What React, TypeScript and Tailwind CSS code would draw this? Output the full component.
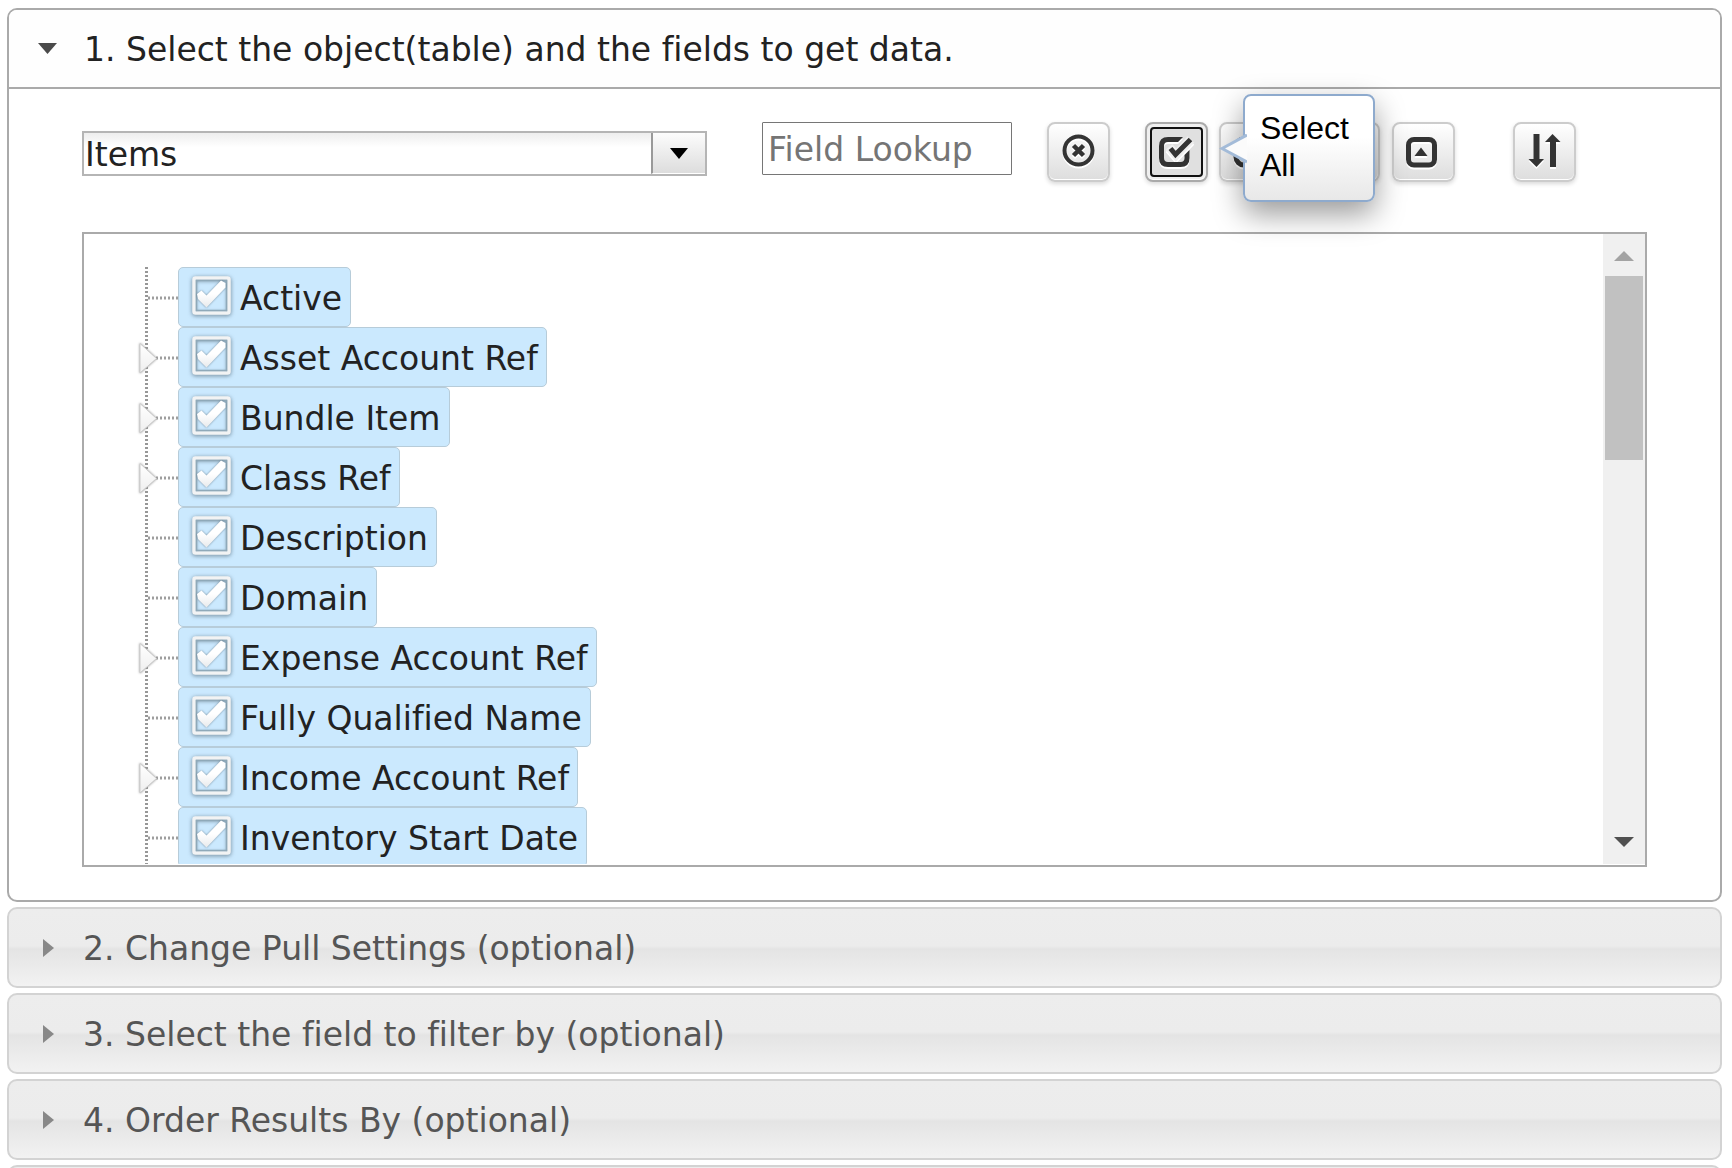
import { useState } from 'react';
import type { ReactNode } from 'react';

const fields = [
  { name: 'Active', branch: false },
  { name: 'Asset Account Ref', branch: true },
  { name: 'Bundle Item', branch: true },
  { name: 'Class Ref', branch: true },
  { name: 'Description', branch: false },
  { name: 'Domain', branch: false },
  { name: 'Expense Account Ref', branch: true },
  { name: 'Fully Qualified Name', branch: false },
  { name: 'Income Account Ref', branch: true },
  { name: 'Inventory Start Date', branch: false },
];

const steps = [
  '2. Change Pull Settings (optional)',
  '3. Select the field to filter by (optional)',
  '4. Order Results By (optional)',
];

const stepClass =
  'flex h-[81px] w-full items-center rounded-[10px] border-2 border-[#d3d3d3] bg-[linear-gradient(to_bottom,#ededed,#ececec_48%,#e4e4e4_52%,#f2f2f2)] pl-[34px] text-left text-[#555555]';

function ToolButton({ label, active = false, className = '', children }: { label: string; active?: boolean; className?: string; children: ReactNode }) {
  return (
    <button
      type="button"
      aria-label={label}
      className={`flex h-[60px] w-[63px] shrink-0 items-center justify-center rounded-lg border-2 shadow-[0_2px_4px_rgba(0,0,0,0.15),inset_0_-1px_0_#fff] ${
        active
          ? 'border-[#aaaaaa] bg-[#efefef] p-[3px]'
          : 'border-[#cccccc] bg-linear-to-b from-white to-[#dddddd]'
      } ${className}`}
    >
      {active ? (
        <span className="flex h-full w-full items-center justify-center rounded-[4px] border-2 border-[#111111] bg-[#e0e0e0]">{children}</span>
      ) : (
        children
      )}
    </button>
  );
}

const iconClass = 'h-[34px] w-[34px] shrink-0 overflow-visible drop-shadow-[0_2px_0_#ffffff]';

function ClearIcon() {
  return (
    <svg viewBox="0 0 34 34" className={iconClass} fill="none" stroke="#333333">
      <circle cx="16.500" cy="15.500" r="14" strokeWidth="4" />
      <path d="M11.500 10.500l10 10M21.500 10.500l-10 10" strokeWidth="4.500" />
    </svg>
  );
}

function CheckIcon() {
  return (
    <svg viewBox="1 0 34 34" className={iconClass} fill="#333333">
      <path d="M24 2H9Q0 2 0 11V23Q0 32 9 32H21.500Q30.500 32 30.500 23V15L25.500 20V23Q25.500 27 21.500 27H9Q5 27 5 23V11Q5 7 9 7H19z" />
      <path d="M10 12l7 8L32 4.500" fill="none" stroke="#efefef" strokeWidth="9" />
      <path d="M11.500 13.500l5 6L31.500 4.500" fill="none" stroke="#333333" strokeWidth="5" />
    </svg>
  );
}

function CircleIcon() {
  return (
    <svg viewBox="0 0 34 34" className={iconClass} fill="none" stroke="#333333">
      <rect x="2" y="4" width="26" height="26" rx="8" strokeWidth="5" />
    </svg>
  );
}

function CollapseIcon() {
  return (
    <svg viewBox="1 0 34 34" className={iconClass} fill="none" stroke="#333333">
      <rect x="2.500" y="4.500" width="26" height="25.500" rx="5.500" strokeWidth="5" />
      <path d="M8.500 21L15 12.500l6.500 8.500z" fill="#333333" stroke="none" />
    </svg>
  );
}

function SortIcon() {
  return (
    <svg viewBox="0 0 34 34" className={iconClass} fill="#333333">
      <path d="M5.500 -1h6v25h4.500L8.500 32L0.500 24h5zM22 32V7h-5L24.500 -1l8 8h-4.500v25z" />
    </svg>
  );
}

function TickBox() {
  return (
    <svg viewBox="0 0 40 40" className="h-10 w-10 overflow-visible" aria-hidden="true">
      <defs>
        <linearGradient id="tick" x1="0" y1="0" x2="0" y2="1">
          <stop offset="0.500" stopColor="#ffffff" />
          <stop offset="1" stopColor="#e8eaec" />
        </linearGradient>
      </defs>
      <g className="drop-shadow-[0_1px_2px_rgba(60,80,95,0.7)]">
        <rect x="3" y="3" width="35" height="35" rx="1.500" fill="none" stroke="#f2f3f4" strokeWidth="3.500" />
      </g>
      <rect x="5.500" y="5.500" width="30" height="30" fill="none" stroke="#8fa9b9" strokeWidth="1.500" />
      <path
        d="M6 19L10.500 15.500L15.500 20.500L30 5.500L34.500 8V12.500L15.500 32.500L7 24z"
        fill="url(#tick)"
        className="drop-shadow-[0_0_1px_rgba(60,80,95,0.6)]"
      />
    </svg>
  );
}

function FieldRow({ name, branch }: { name: string; branch: boolean }) {
  const [checked, setChecked] = useState(true);
  return (
    <li className="flex h-[60px] items-stretch">
      <div className="relative w-[33px] shrink-0" aria-hidden="true">
        <svg className="h-[60px] w-[33px]" viewBox="0 0 33 60" fill="none">
          <path d="M1.500 0V60" stroke="#979797" strokeWidth="3" strokeDasharray="2 2" />
          <path d="M3 31H33" stroke="#9e9e9e" strokeWidth="3" strokeDasharray="2 2" />
        </svg>
        {branch && (
          <svg className="absolute top-[14px] -left-[7px] h-9 w-6 drop-shadow-[0_0_1px_#999999]" viewBox="0 0 24 36">
            <defs>
              <linearGradient id="branch" x1="0" y1="0" x2="0" y2="1">
                <stop offset="0" stopColor="#ffffff" />
                <stop offset="1" stopColor="#eeeeee" />
              </linearGradient>
            </defs>
            <path d="M2 2.500L18.500 17.500L2 32z" fill="url(#branch)" stroke="#cccccc" strokeWidth="1" />
          </svg>
        )}
      </div>
      <label className="flex items-center rounded-[5px] border border-[#b7ccd9] bg-[#cbe9fe] pr-2 pl-3 text-[#222222]">
        <input type="checkbox" className="peer sr-only" checked={checked} onChange={(e) => setChecked(e.target.checked)} />
        <span className="mr-[9px] pb-1">
          <TickBox />
        </span>
        <span className="pt-1 whitespace-nowrap">{name}</span>
      </label>
    </li>
  );
}

export default function App() {
  return (
    <main className="flex h-screen flex-col gap-[5px] overflow-hidden bg-white pt-2 pr-[10px] pl-[7px] font-['Verdana','DejaVu_Sans',sans-serif] text-[33px] leading-[40px] text-[#222222] [font-variant-ligatures:none]">
      <section className="shrink-0 rounded-[10px] border-2 border-[#aaaaaa] bg-white">
        <h3 className="border-b-2 border-[#aaaaaa]">
          <button type="button" aria-expanded="true" className="flex h-[77px] w-full items-center rounded-t-lg bg-[#fefefe] pl-[29px] text-left">
            <svg viewBox="0 0 20 12" className="mr-[26px] h-3 w-5 shrink-0 fill-[#4a4a4a]" aria-hidden="true">
              <path d="M0 0H19L9.500 11z" />
            </svg>
            <span className="pt-[2px]">1. Select the object(table) and the fields to get data.</span>
          </button>
        </h3>
        <div className="px-[73px] pt-[33px] pb-[33px]">
          <div className="flex h-[60px] items-start">
            <div className="relative mt-[9px] h-[45px] w-[625px] shrink-0 border-2 border-[#b5b5b5] bg-linear-to-b from-[#eeeeee] to-white to-35%">
              <select aria-label="Object" className="h-full w-full appearance-none bg-transparent pt-[2px] pl-px text-[#222222]">
                <option>Items</option>
              </select>
              <span className="pointer-events-none absolute inset-y-0 right-0 flex w-[54px] items-center justify-center border-b border-l-2 border-b-white border-l-[#999999] bg-linear-to-b from-[#fcfcfc] to-[#dddddd]">
                <svg viewBox="0 0 18 11" className="h-[11px] w-[18px] fill-black" aria-hidden="true">
                  <path d="M0 0H18L9 11z" />
                </svg>
              </span>
            </div>
            <input
              type="text"
              aria-label="Field Lookup"
              placeholder="Field Lookup"
              className="ml-[55px] h-[53px] w-[250px] shrink-0 rounded-[1px] border border-[#767676] bg-white px-[5px] pt-[2px] placeholder:text-[#757575]"
            />
            <ToolButton label="Clear lookup" className="ml-[35px]"><ClearIcon /></ToolButton>
            <div className="relative ml-[35px]">
              <ToolButton label="Select All" active><CheckIcon /></ToolButton>
              <div role="tooltip" className="absolute -top-7 left-[98px] z-10 w-[132px] rounded-lg border-2 border-[#8eaacd] bg-linear-to-b from-white from-40% to-[#e8e8e8] pt-[14px] pr-4 pb-4 pl-[15px] font-['Liberation_Sans',sans-serif] text-[32px] leading-[37px] text-black shadow-[0_12px_30px_rgba(0,0,0,0.4)]">
                <svg className="absolute top-[38px] -left-[26px] h-8 w-7" viewBox="0 0 28 32" aria-hidden="true">
                  <path d="M28 1L3 14.500L28 28" fill="#fbfbfb" stroke="#a3bbd8" strokeWidth="3" />
                </svg>
                Select All
              </div>
            </div>
            <ToolButton label="Deselect All" className="ml-[11px]"><CircleIcon /></ToolButton>
            <ToolButton label="Expand All" className="ml-[35px]"><CircleIcon /></ToolButton>
            <ToolButton label="Collapse All" className="ml-3"><CollapseIcon /></ToolButton>
            <ToolButton label="Sort fields" className="ml-[58px]"><SortIcon /></ToolButton>
          </div>
          <div className="mt-[50px] flex h-[635px] border-2 border-[#aaaaaa]">
            <ul className="mb-px min-w-0 flex-1 overflow-hidden pt-[33px] pl-[61px]">
              {fields.map((f) => (
                <FieldRow key={f.name} name={f.name} branch={f.branch} />
              ))}
            </ul>
            <div className="mb-px flex w-[42px] shrink-0 flex-col items-center bg-[#f0f0f0]" aria-hidden="true">
              <svg viewBox="0 0 20 10" className="mt-[17px] mb-[15px] h-[10px] w-5 fill-[#a3a3a3]">
                <path d="M0 10L10 0L20 10z" />
              </svg>
              <div className="h-[184px] w-[38px] bg-[#c1c1c1]" />
              <svg viewBox="0 0 20 10" className="mt-auto mb-[17px] h-[10px] w-5 fill-[#505050]">
                <path d="M0 0H20L10 10z" />
              </svg>
            </div>
          </div>
        </div>
      </section>
      {steps.map((s) => (
        <h3 key={s} className="shrink-0">
          <button type="button" aria-expanded="false" className={stepClass}>
            <svg viewBox="0 0 11 20" className="mr-[29px] h-5 w-[11px] shrink-0 fill-[#888888]" aria-hidden="true">
              <path d="M0 1L11 10L0 19z" />
            </svg>
            <span className="pt-[2px]">{s}</span>
          </button>
        </h3>
      ))}
      <h3 className="shrink-0">
        <button type="button" aria-expanded="false" aria-label="Next step" className={stepClass} />
      </h3>
    </main>
  );
}
